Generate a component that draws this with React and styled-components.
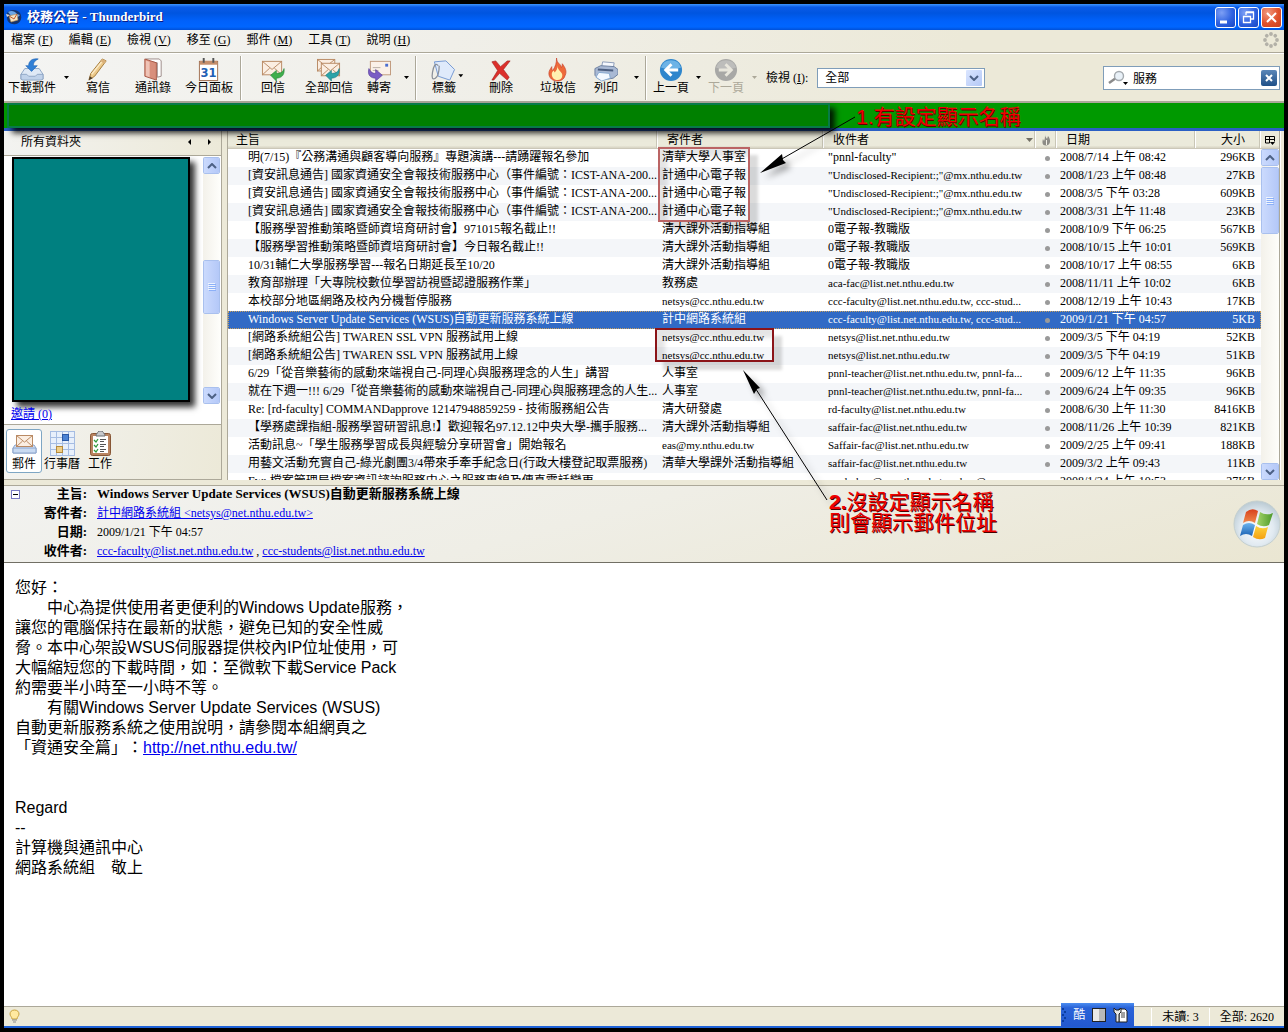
import React from "react";
import styled, { createGlobalStyle, css } from "styled-components";

const ink = "#000";
const face = "#ece9d8";
const line = "#aca899";
const xpBlue = "#316ac5";
const serif = '"Liberation Serif", "Noto Sans CJK TC", serif';
const sans = '"Liberation Sans", "Noto Sans CJK TC", sans-serif';
const chrome = "linear-gradient(100deg, #f4f4f2 0%, #f0efe9 35%, #ece9d8 75%)";

const Global = createGlobalStyle`
  * { box-sizing: border-box; }
  body { margin: 0; background: #000; font: 12px/16px ${serif}; color: ${ink}; text-spacing-trim: space-all; }
  button, input, select { font: inherit; color: inherit; padding: 0; border: 0; background: none; border-radius: 0; }
  a { color: #0000ee; }
  svg { display: block; }
`;

const Desktop = styled.div`
  position: relative;
  display: flex;
  min-height: 100vh;
  padding: 4px;
  overflow: hidden;
`;
const Window = styled.main`
  flex: 1;
  min-width: 0;
  display: flex;
  flex-direction: column;
  background: ${face};
  border-bottom: 2px solid #1e62d8;
`;

/* Title bar */
const TitleBar = styled.header`
  display: flex;
  align-items: center;
  gap: 5px;
  height: 26px;
  padding: 0 2px 0 2px;
  background: linear-gradient(#3d95ff 0, #0a5be8 12%, #0055e0 35%, #0061fb 65%, #0066ff 88%, #0050d8 100%);
`;
const WindowTitle = styled.h1`
  flex: 1;
  margin: 0;
  font-size: 13px;
  line-height: 18px;
  font-weight: 700;
  color: #fff;
  text-shadow: 1px 1px #0a1883;
`;
const WindowButtons = styled.div`
  display: flex;
  gap: 2px;
`;
const WindowButton = styled.button`
  width: 21px;
  height: 21px;
  border: 1px solid #fff;
  border-radius: 3px;
  background: ${(p) =>
    p.$close
      ? "radial-gradient(circle at 30% 25%, #f09a80, #e0512b 55%, #c8401c)"
      : "radial-gradient(circle at 30% 25%, #7d9ff5, #2f62e0 55%, #1747c4)"};
`;

/* Menus */
const MenuBar = styled.nav`
  display: flex;
  align-items: center;
  gap: 16px;
  height: 23px;
  padding: 0 5px 2px 7px;
  background: ${chrome};
  border-bottom: 1px solid ${line};
`;
const MenuItem = styled.button`
  line-height: 18px;
  white-space: nowrap;
`;
const Spacer = styled.div`
  flex: 1;
`;

/* Tool bar */
const ToolBar = styled.div`
  display: flex;
  align-items: center;
  height: 50px;
  padding-right: 4px;
  background: ${chrome};
  border-top: 1px solid #fff;
  border-bottom: 2px solid ${line};
`;
const ToolButton = styled.button`
  display: flex;
  flex-direction: column;
  align-items: center;
  width: ${(p) => p.$w}px;
  padding-bottom: 4px;
  line-height: 12px;
  white-space: nowrap;
  color: ${(p) => (p.disabled ? "#aca899" : ink)};
`;
const CaretButton = styled.button`
  display: flex;
  justify-content: center;
  width: 12px;
  color: ${(p) => (p.disabled ? "#aca899" : ink)};
`;
const ToolSeparator = styled.div`
  width: 2px;
  height: 44px;
  margin: 0 ${(p) => (p.$wide ? 4 : 3)}px;
  background: ${line};
  border-right: 1px solid #fff;
`;
const FieldLabel = styled.label`
  margin: 0 9px 0 6px;
  white-space: nowrap;
`;
const SelectBox = styled.div`
  display: grid;
  grid-template-columns: 1fr 18px;
  align-items: center;
  width: 168px;
  height: 20px;
  border: 1px solid #7f9db9;
  background: #fff;
`;
const Select = styled.select`
  grid-row: 1;
  grid-column: 1 / 3;
  height: 18px;
  padding-left: 7px;
  appearance: none;
  outline: 0;
`;
const SelectArrow = styled.span`
  grid-row: 1;
  grid-column: 2;
  display: grid;
  place-items: center;
  width: 16px;
  height: 16px;
  background: linear-gradient(135deg, #dbe6ff, #b4c8f6);
  border-radius: 1px;
  pointer-events: none;
`;
const SearchBox = styled.form`
  display: flex;
  align-items: center;
  gap: 5px;
  width: 177px;
  height: 24px;
  margin-left: auto;
  padding: 0 2px 0 4px;
  border: 1px solid #7f9db9;
  background: #fff;
`;
const SearchInput = styled.input`
  flex: 1;
  min-width: 0;
  height: 20px;
  outline: 0;
`;
const ClearButton = styled.button`
  display: grid;
  place-items: center;
  width: 16px;
  height: 16px;
  border-radius: 2px;
  background: linear-gradient(#5c87b8, #1f4f87);
`;

/* Covered strip beneath the tool bar */
const Strip = styled.div`
  position: relative;
  z-index: 2;
  height: 28px;
  padding-left: 3px;
  background: #009900;
  border-bottom: 3px solid #2a5fc4;
`;
const StripCover = styled.div`
  width: 823px;
  height: 25px;
  background: #008000;
  border: 2px solid #077a48;
  box-shadow: 5px 5px 6px rgba(0, 0, 0, 0.85);
`;

/* Upper panes */
const Panes = styled.div`
  flex: 0 0 349px;
  display: flex;
  min-height: 0;
`;
const FolderPane = styled.aside`
  width: 218px;
  display: flex;
  flex-direction: column;
  border-right: 1px solid ${line};
`;
const PaneHeader = styled.div`
  display: flex;
  align-items: center;
  height: 25px;
  padding: 0 2px 3px 17px;
  background: linear-gradient(100deg, #f3f3f1, #ece9d8);
  border-bottom: 1px solid ${line};
`;
const PaneTitle = styled.span`
  flex: 1;
`;
const PaneArrow = styled.button`
  display: grid;
  place-items: center;
  width: 20px;
  height: 16px;
`;
const FolderArea = styled.div`
  flex: 1;
  min-height: 0;
  display: flex;
  flex-direction: column;
  background: #fff;
`;
const FolderBody = styled.div`
  display: flex;
  justify-content: space-between;
  height: 248px;
  padding: 1px 1px 0 8px;
`;
const FolderCover = styled.div`
  width: 178px;
  height: 245px;
  background: #008080;
  border: 2px solid #000;
  box-shadow: 5px 5px 6px rgba(0, 0, 0, 0.8);
`;
const InviteLink = styled.a`
  align-self: flex-start;
  position: relative;
  padding-left: 7px;
  line-height: 20px;
`;
const ModeBar = styled.div`
  display: flex;
  align-items: center;
  gap: 2px;
  height: 56px;
  padding: 0 2px 2px;
  background: linear-gradient(100deg, #f3f3f1, #ece9d8);
  border-top: 1px solid ${line};
  border-bottom: 1px solid ${line};
`;
const ModeButton = styled.button`
  display: flex;
  flex-direction: column;
  align-items: center;
  justify-content: center;
  width: 36px;
  height: 44px;
  white-space: nowrap;
  border: 1px solid transparent;
  border-radius: 3px;
  ${(p) =>
    p.$active &&
    css`
      background: #fff;
      border-color: #7ea6c4;
    `}
`;
const Splitter = styled.div`
  width: 6px;
  background: ${face};
  border-right: 1px solid ${line};
`;

const ListPane = styled.section`
  flex: 1;
  min-width: 0;
  display: grid;
  grid-template-columns: 1fr 18px;
  background: #fff;
  border-right: 1px solid ${line};
`;
const ListClip = styled.div`
  overflow: hidden;
  min-width: 0;
`;
const WindowEdge = styled.div`
  width: 4px;
  background: ${face};
  border-left: 1px solid #fff;
`;
const Table = styled.table`
  width: 100%;
  table-layout: fixed;
  border-collapse: separate;
  border-spacing: 0;
`;
const headFill = css`
  height: 18px;
  background: linear-gradient(#ebeadb 85%, #d6d2c2);
  border-bottom: 1px solid #cbc7b8;
`;
const Th = styled.th`
  ${headFill}
  padding: 0 ${(p) => (p.$end ? 16 : 3)}px 0 ${(p) => p.$pad ?? 9}px;
  font-weight: 400;
  text-align: ${(p) => (p.$end ? "right" : "left")};
  box-shadow: inset -1px 0 #fff, inset -2px 0 #c9c6b6;
`;
const ThInner = styled.span`
  display: flex;
  align-items: center;
  justify-content: space-between;
`;
const Td = styled.td`
  height: 18px;
  padding: 0 ${(p) => (p.$end ? 6 : 0)}px 0 ${(p) => p.$pad ?? 4}px;
  font-size: ${(p) => (p.$address ? 11 : 12)}px;
  line-height: 16px;
  vertical-align: ${(p) => (p.$mid ? "middle" : "top")};
  overflow: hidden;
  white-space: nowrap;
  text-overflow: ellipsis;
  text-align: ${(p) => (p.$end ? "right" : "left")};
`;
const Row = styled.tr`
  background: #fff;
  &:nth-child(even) { background: #f4f6f9; }
  ${(p) =>
    p.$selected &&
    css`
      && { background: ${xpBlue}; color: #fff; outline: 1px dotted #c9a05c; outline-offset: -1px; }
    `}
`;
const Dot = styled.i`
  display: block;
  width: 5px;
  height: 5px;
  border-radius: 50%;
  background: #9a9a9a;
`;
const Side = styled.div`
  display: flex;
  flex-direction: column;
  min-height: 0;
`;
const PickerButton = styled.button`
  ${headFill}
  display: grid;
  place-items: center;
`;

/* Scroll bars */
const Track = styled.div`
  flex: ${(p) => (p.$w ? "none" : 1)};
  width: ${(p) => (p.$w ? p.$w + "px" : "100%")};
  display: flex;
  flex-direction: column;
  background: linear-gradient(90deg, #f3f1ea, #fefefb);
`;
const thumbSkin = css`
  display: grid;
  place-items: center;
  width: 100%;
  border: 1px solid #fff;
  outline: 1px solid #a9c0ee;
  outline-offset: -1px;
  border-radius: 2px;
  background: linear-gradient(90deg, #cbdafd, #b4c8f8);
`;
const TrackButton = styled.button`
  ${thumbSkin}
  height: 17px;
`;
const Thumb = styled.div`
  ${thumbSkin}
  height: ${(p) => p.$h}px;
`;
const Gap = styled.div`
  flex: ${(p) => p.$grow};
`;

/* Message */
const MessageHead = styled.section`
  display: flex;
  align-items: flex-start;
  height: 78px;
  margin-top: 5px;
  padding: 0 3px 0 7px;
  background: linear-gradient(165deg, #f2f2f0 0%, #efeee6 45%, #eae6d2 100%);
  border-top: 1px solid ${line};
  border-bottom: 1px solid #716f64;
`;
const Toggle = styled.button`
  display: grid;
  place-items: center;
  width: 9px;
  height: 9px;
  margin-top: 4px;
  border: 1px solid #7b7bc4;
  background: #fff;
`;
const Fields = styled.dl`
  flex: 1;
  display: grid;
  grid-template-columns: 67px 1fr;
  column-gap: 10px;
  row-gap: 3px;
  margin: 0;
`;
const Term = styled.dt`
  font-size: 13px;
  font-weight: 700;
  text-align: right;
`;
const Detail = styled.dd`
  margin: 0;
  font-size: ${(p) => (p.$strong ? 13 : 12)}px;
  font-weight: ${(p) => (p.$strong ? 700 : 400)};
`;
const Badge = styled.div`
  align-self: center;
`;
const MessageBody = styled.article`
  flex: 1;
  padding: 15px 11px;
  background: #fff;
  font: 16px/20px ${sans};
`;
const Paragraph = styled.p`
  margin: 0;
  min-height: 20px;
  white-space: pre;
`;

/* Status bar */
const StatusBar = styled.footer`
  display: flex;
  align-items: center;
  height: 20px;
  padding: 0 10px 0 5px;
  background: ${face};
  border-top: 1px solid ${line};
`;
const StatusCell = styled.span`
  margin-left: 10px;
  padding-left: 10px;
  line-height: 18px;
  border-left: 1px solid #fff;
`;
const LanguageBar = styled.div`
  display: flex;
  align-items: center;
  gap: 7px;
  height: 24px;
  margin: -4px 7px 0 0;
  padding: 0 6px 0 1px;
  color: #fff;
  background: linear-gradient(#4b8df0, #2a63d8 20%, #2258d0);
`;

/* Notes drawn over the window */
const Notes = styled.div`
  position: absolute;
  top: 0;
  right: 0;
  width: 633px;
  height: 600px;
  z-index: 5;
  pointer-events: none;
`;
const Frame = styled.div`
  position: absolute;
  left: ${(p) => p.$x}px;
  top: ${(p) => p.$y}px;
  width: ${(p) => p.$w}px;
  height: ${(p) => p.$h}px;
  border: 2px solid ${(p) => p.$tone};
  box-shadow: 8px 8px 3px rgba(0, 0, 0, 0.14), inset 8px 8px 4px rgba(0, 0, 0, 0.1);
`;
const NoteText = styled.p`
  position: absolute;
  left: ${(p) => p.$x}px;
  top: ${(p) => p.$y}px;
  margin: 0;
  font: 21px/21px ${sans};
  color: #f00000;
  white-space: nowrap;
  text-shadow: 1px 1px ${(p) => p.$shade};
`;
const Arrows = styled.svg`
  position: absolute;
  left: 0;
  top: 0;
  filter: drop-shadow(5px 5px 3px rgba(0, 0, 0, 0.35));
`;

/* Icons */
const Caret = () => (
  <svg width="5" height="3" viewBox="0 0 5 3"><path d="M0 0h5L2.5 3z" fill="currentColor" /></svg>
);
const Chevron = ({ up }) => (
  <svg width="10" height="6" viewBox="0 0 10 6">
    <path d={up ? "M1 5l4-4 4 4" : "M1 1l4 4 4-4"} fill="none" stroke="#4d6185" strokeWidth="2" />
  </svg>
);
const Grip = () => (
  <svg width="8" height="8" viewBox="0 0 8 8">
    <path d="M0 .5h7M0 2.5h7M0 4.5h7M0 6.5h7" stroke="#eef4fe" />
    <path d="M1 1.5h7M1 3.5h7M1 5.5h7M1 7.5h7" stroke="#8cb0f8" />
  </svg>
);
const envelope = (x, y, w, h) => (
  <g stroke="#b98a64" strokeWidth="1">
    <rect x={x} y={y} width={w} height={h} fill="#fbeee2" />
    <path d={`M${x} ${y + h}l${w * 0.38} ${-h * 0.5}M${x + w} ${y + h}l${-w * 0.38} ${-h * 0.5}M${x} ${y}l${w / 2} ${h * 0.6}l${w / 2} ${-h * 0.6}`} fill="none" />
  </g>
);
const art = {
  get: (
    <>
      <path d="M5 11h15l4 6v5H1v-5z" fill="#dfe9f6" stroke="#8fa6c6" />
      <path d="M1 17h6l2 2h7l2-2h6v5l-2 1H3l-2-1z" fill="#c0d2ea" stroke="#8fa6c6" />
      <path d="M19 1c-6-1-10 2-10 7H6l6 6 6-6h-4c0-3 1-5 5-7z" fill="#2f7fd6" stroke="#1b5fb0" strokeWidth=".6" />
    </>
  ),
  write: (
    <>
      <path d="M3 23l2-7L17 1l4 2-12 16z" fill="#ecc98a" stroke="#a27a3c" />
      <path d="M6 17L18 2" stroke="#fbe9c4" strokeWidth="1.5" />
      <path d="M3 23l1-4 3 2z" fill="#4a3a28" />
      <path d="M17 1l4 2-2 3-4-3z" fill="#d9b07a" />
    </>
  ),
  book: (
    <>
      <path d="M5 1h14l2 2v16l-4 1V5L5 3z" fill="#fff" stroke="#9c8b88" />
      <path d="M4 1l12 4v18L4 19z" fill="#d88f7c" stroke="#a85a48" />
      <path d="M5 2.500l4 1.500v16l-4-1.500z" fill="#efc3b6" />
    </>
  ),
  today: (
    <>
      <rect x="2.500" y="3.500" width="19" height="20" fill="#fff" stroke="#a06f50" />
      <rect x="3" y="3" width="18" height="4" fill="#c58e6b" />
      <path d="M7 0v5M17 0v5" stroke="#555" strokeWidth="2" />
      <text x="12" y="20" fontFamily="DejaVu Sans" fontSize="12" fontWeight="700" fill="#1f5fb5" textAnchor="middle">31</text>
    </>
  ),
  reply: (
    <>
      {envelope(1.5, 3.5, 20, 14)}
      <path d="M10 18l6-5v3c4 0 7-1 8-5 1 7-3 10-8 10v3z" fill="#3fae4c" stroke="#1f7f33" strokeWidth=".6" />
    </>
  ),
  replyAll: (
    <>
      {envelope(0.5, 1.5, 18, 12)}
      {envelope(4.5, 5.5, 19, 13)}
      <path d="M9 18l6-5v3c4 0 7-1 8-5 1 7-3 10-8 10v3z" fill="#2ba3a8" stroke="#14777e" strokeWidth=".6" />
    </>
  ),
  forward: (
    <>
      <rect x="3.500" y="3.500" width="21" height="14" fill="#fbf1e8" stroke="#c09a7c" />
      <path d="M6 10h8M6 13h6" stroke="#b9b0a6" />
      <rect x="19" y="6" width="3" height="3" fill="#4c6fd0" />
      <path d="M16 18l-7-6v4c-3 0-5-1-7-5-2 7 2 10 7 10v3z" fill="#7a5cc4" stroke="#4f3597" strokeWidth=".6" />
    </>
  ),
  remove: <path d="M3 4l4-1 5 6 7-6h3l-7 9 6 8-2 3-8-7-6 7H3l6-10z" fill="#dc2f2a" stroke="#9c1a18" strokeWidth=".6" />,
  junk: (
    <>
      <path d="M11 0c0 6 5 6 5 10 1-1 1-3 1-4 3 4 5 8 3 12-1 4-4 6-8 6-5 0-9-3-9-8 0-3 2-5 3-7 0 2 0 3 1 4 3-4 4-8 4-13z" fill="#ee6a3a" stroke="#c8402a" strokeWidth=".7" />
      <path d="M12 8c0 5 5 6 5 10 0 3-2 5-5 5-4 0-6-3-6-6 0-2 1-3 2-4l1 2c2-2 3-4 3-7z" fill="#fff1b0" />
    </>
  ),
  print: (
    <>
      <path d="M8 9l1-5 12 1-1 6z" fill="#f5f8fd" stroke="#8c9cb8" />
      <path d="M1 11l6-3 14 1 4 3v5l-5 4-6 1H5l-4-4z" fill="#a9b9d4" stroke="#6c7f9f" />
      <path d="M4 12l16 1" stroke="#4d5f80" strokeWidth="2" />
      <path d="M5 15l11 1 1 5-9 3-6-4z" fill="#f4f9ff" stroke="#86a8cf" />
    </>
  ),
};
const Pic = ({ name }) => <svg width="24" height="24" viewBox="0 0 25 25" aria-hidden="true">{art[name]}</svg>;
const TagPic = () => (
  <svg width="40" height="24" viewBox="0 0 40 25" aria-hidden="true">
    <path d="M10 4l12-1 9 9-5 11-12-4z" fill="#dfeafb" stroke="#7398d2" />
    <path d="M14 8c-3-4-5 1-6 7s0 8 3 6 4-7 4-13" fill="none" stroke="#8a8f98" strokeWidth="1.3" />
    <path d="M35 17h5l-2.500 3z" />
  </svg>
);
const RoundArrow = ({ next }) => (
  <svg width="24" height="24" viewBox="0 0 25 25" aria-hidden="true">
    <circle cx="12.500" cy="12.500" r="11.500" fill={next ? "#a8a8a6" : "#2f86cc"} />
    <path d="M2 10a11 11 0 0121 0q-10 4-21 0z" fill={next ? "#bdbdbb" : "#6db3e6"} />
    <path d={next ? "M5 12.500h13M12 6.500l6 6-6 6" : "M20 12.500H7M13 6.500l-6 6 6 6"} fill="none" stroke={next ? "#e8e6dc" : "#fff"} strokeWidth="3" />
  </svg>
);
const AppIcon = () => (
  <svg width="16" height="16" viewBox="0 0 16 16" aria-hidden="true">
    <path d="M1 4c3-4 10-4 13 0 3 5 0 10-4 11-5 1-9-2-9-6z" fill="#14346f" />
    <path d="M2 3c3-2 7-1 9 2l3 1-2 2H6z" fill="#6ba6e8" />
    <path d="M3 7l8-2 1 6-7 2z" fill="#f4e3c4" stroke="#b68b52" strokeWidth=".6" />
    <path d="M3 7l5 3 3-5" fill="none" stroke="#c25a2c" />
    <path d="M0 5l4 1-3 2z" fill="#d8d8d8" />
  </svg>
);
const WinGlyph = ({ kind }) => (
  <svg width="19" height="19" viewBox="0 0 19 19" stroke="#fff" fill="none" aria-hidden="true">
    {kind === "min" && <path d="M4 14h7" strokeWidth="3" />}
    {kind === "max" && <path d="M7 7V4.500h7.500V11H12M7 4h8M4.500 8.500h7v6h-7zM4 8.500h8" strokeWidth="1.3" />}
    {kind === "close" && <path d="M5 5l9 9M14 5l-9 9" strokeWidth="2" />}
  </svg>
);
const Throbber = () => (
  <svg width="16" height="16" viewBox="0 0 16 16" fill="#b3b1a8" aria-hidden="true">
    {[0, 45, 90, 135, 180, 225, 270, 315].map((a) => (
      <circle key={a} cx="8" cy="2" r="1.900" transform={`rotate(${a} 8 8)`} />
    ))}
  </svg>
);
const Magnifier = () => (
  <svg width="20" height="16" viewBox="0 0 20 16" aria-hidden="true">
    <path d="M1 13l7-5" stroke="#8b8b8b" strokeWidth="2.500" />
    <circle cx="11" cy="6" r="4.500" fill="#e9f1f8" stroke="#a3a9ae" strokeWidth="1.400" />
    <path d="M15 12h5l-2.500 3z" />
  </svg>
);
const Flame = () => (
  <svg width="9" height="12" viewBox="0 0 9 12" aria-hidden="true">
    <path d="M3 0c0 3 1 3 2 5l1-3c3 3 3 9-1.500 9.500C0 12 0 8 1 5l1 2c1-2 1-4 1-7z" fill="#8d8c86" />
    <path d="M4.500 6v5" stroke="#f3f1e8" />
  </svg>
);
const WindowsBadge = () => (
  <svg width="48" height="48" viewBox="0 0 48 48" aria-hidden="true">
    <defs>
      <radialGradient id="orb" cx=".5" cy=".6" r=".6">
        <stop offset="0" stopColor="#fff" />
        <stop offset=".6" stopColor="#e1eaf1" />
        <stop offset="1" stopColor="#b9c9d2" />
      </radialGradient>
      <linearGradient id="paneRed" x2="0" y2="1"><stop stopColor="#d8401c" /><stop offset="1" stopColor="#f08a4c" /></linearGradient>
      <linearGradient id="paneGreen" x2="1"><stop stopColor="#a4d468" /><stop offset="1" stopColor="#4d9a2a" /></linearGradient>
      <linearGradient id="paneBlue" x2="0" y2="1"><stop stopColor="#6ab4ee" /><stop offset="1" stopColor="#1c62b4" /></linearGradient>
      <linearGradient id="paneGold" x2="0" y2="1"><stop stopColor="#fdd23c" /><stop offset="1" stopColor="#f4a012" /></linearGradient>
    </defs>
    <circle cx="24" cy="24" r="23" fill="url(#orb)" stroke="#c4cfcf" />
    <path d="M13 12q6-5 12-1l-3 12q-6-4-12 0z" fill="url(#paneRed)" />
    <path d="M27 12q6 4 13 1l-4 12q-6 3-12-1z" fill="url(#paneGreen)" />
    <path d="M10 25q6-4 12 0l-3 11q-6-4-12 0z" fill="url(#paneBlue)" />
    <path d="M23 26q6 4 12 1l-3 11q-6 3-12-1z" fill="url(#paneGold)" />
  </svg>
);
const MailMode = () => (
  <svg width="25" height="25" viewBox="0 -3 25 25" aria-hidden="true">
    <path d="M3 11l-2 3v5h23v-5l-2-3z" fill="#d5e2f5" stroke="#8aa4cc" />
    {envelope(4.5, 1.5, 16, 11)}
    <path d="M1 14h23v5H1z" fill="#c9daf2" stroke="#8aa4cc" />
  </svg>
);
const CalendarMode = () => (
  <svg width="25" height="25" viewBox="0 0 25 25" aria-hidden="true">
    <rect width="25" height="25" fill="#e8f0fb" />
    <path d="M0 .5h25M0 6.500h25M0 12.500h25M0 18.500h25M0 24.500h25M.5 0v25M6.500 0v25M12.500 0v25M18.500 0v25M24.500 0v25" stroke="#a6bde2" />
    <rect x="12.500" y="3.500" width="6" height="6" fill="#4a82d4" stroke="#2a58a4" />
    <rect x="6.500" y="15.500" width="6" height="6" fill="#f0cf86" stroke="#b58a3c" />
  </svg>
);
const TaskMode = () => (
  <svg width="21" height="25" viewBox="0 0 21 25" aria-hidden="true">
    <rect x=".5" y="2.500" width="20" height="22" rx="2" fill="#b98460" stroke="#875636" />
    <rect x="3" y="5" width="15" height="17" fill="#fff" />
    <path d="M6 5c0-3 2-3 3-5h3c1 2 3 2 3 5z" fill="#c7c9cc" stroke="#6a6e73" />
    <path d="M4 9l2 2 2-3M4 14l2 2 2-3M4 19l2 2 2-3" fill="none" stroke="#2f9a3c" strokeWidth="1.300" />
    <path d="M10 8.500h6M10 10.500h4M10 13.500h6M10 15.500h4M10 18.500h6M10 20.500h4" stroke="#555" />
  </svg>
);
const Bulb = () => (
  <svg width="11" height="15" viewBox="0 0 11 15" aria-hidden="true">
    <path d="M5.500 1c3 0 4.500 2 4.500 4s-2 3-2 5H3C3 8 1 7 1 5s1.500-4 4.500-4z" fill="#ffe9a0" stroke="#c9a23c" />
    <path d="M3 11h5M4 13h3" stroke="#8b8b8b" />
  </svg>
);

const menus = [["檔案", "F"], ["編輯", "E"], ["檢視", "V"], ["移至", "G"], ["郵件", "M"], ["工具", "T"], ["說明", "H"]];
const security = "[資安訊息通告] 國家資通安全會報技術服務中心（事件編號：ICST-ANA-200...";
const undisclosed = '"Undisclosed-Recipient:;"@mx.nthu.edu.tw';
const cccLists = "ccc-faculty@list.net.nthu.edu.tw, ccc-stud...";
const pnnlLists = "pnnl-teacher@list.net.nthu.edu.tw, pnnl-fa...";
const mails = [
  ["明(7/15)『公務溝通與顧客導向服務』專題演講---請踴躍報名參加", "清華大學人事室", '"pnnl-faculty"', "2008/7/14 上午 08:42", "296KB"],
  [security, "計通中心電子報", undisclosed, "2008/1/23 上午 08:48", "27KB"],
  [security, "計通中心電子報", undisclosed, "2008/3/5 下午 03:28", "609KB"],
  [security, "計通中心電子報", undisclosed, "2008/3/31 上午 11:48", "23KB"],
  ["【服務學習推動策略暨師資培育研討會】971015報名截止!!", "清大課外活動指導組", "0電子報-教職版", "2008/10/9 下午 06:25", "567KB"],
  ["【服務學習推動策略暨師資培育研討會】今日報名截止!!", "清大課外活動指導組", "0電子報-教職版", "2008/10/15 上午 10:01", "569KB"],
  ["10/31輔仁大學服務學習---報名日期延長至10/20", "清大課外活動指導組", "0電子報-教職版", "2008/10/17 上午 08:55", "6KB"],
  ["教育部辦理「大專院校數位學習訪視暨認證服務作業」", "教務處", "aca-fac@list.net.nthu.edu.tw", "2008/11/11 上午 10:02", "6KB"],
  ["本校部分地區網路及校內分機暫停服務", "netsys@cc.nthu.edu.tw", cccLists, "2008/12/19 上午 10:43", "17KB"],
  ["Windows Server Update Services (WSUS)自動更新服務系統上線", "計中網路系統組", cccLists, "2009/1/21 下午 04:57", "5KB"],
  ["[網路系統組公告] TWAREN SSL VPN 服務試用上線", "netsys@cc.nthu.edu.tw", "netsys@list.net.nthu.edu.tw", "2009/3/5 下午 04:19", "52KB"],
  ["[網路系統組公告] TWAREN SSL VPN 服務試用上線", "netsys@cc.nthu.edu.tw", "netsys@list.net.nthu.edu.tw", "2009/3/5 下午 04:19", "51KB"],
  ["6/29「從音樂藝術的感動來端視自己-同理心與服務理念的人生」講習", "人事室", pnnlLists, "2009/6/12 上午 11:35", "96KB"],
  ["就在下週一!!! 6/29「從音樂藝術的感動來端視自己-同理心與服務理念的人生...", "人事室", pnnlLists, "2009/6/24 上午 09:35", "96KB"],
  ["Re: [rd-faculty] COMMANDapprove 12147948859259 - 技術服務組公告", "清大研發處", "rd-faculty@list.net.nthu.edu.tw", "2008/6/30 上午 11:30", "8416KB"],
  ["【學務處課指組-服務學習研習訊息!】歡迎報名97.12.12中央大學-攜手服務...", "清大課外活動指導組", "saffair-fac@list.net.nthu.edu.tw", "2008/11/26 上午 10:39", "821KB"],
  ["活動訊息~「學生服務學習成長與經驗分享研習會」開始報名", "eas@my.nthu.edu.tw", "Saffair-fac@list.net.nthu.edu.tw", "2009/2/25 上午 09:41", "188KB"],
  ["用藝文活動充實自己-綠光劇團3/4帶來手牽手紀念日(行政大樓登記取票服務)", "清華大學課外活動指導組", "saffair-fac@list.net.nthu.edu.tw", "2009/3/2 上午 09:43", "11KB"],
  ["Fw: 檔案管理局檔案資訊諮詢服務中心之服務專線及傳真電話變更", "", "pnnl-chao@my.nthu.edu.tw, chao@my...", "2008/1/24 上午 10:53", "27KB"],
];
const isAddress = (text) => text.includes("@");
const letter = [
  "您好：",
  "　　中心為提供使用者更便利的Windows Update服務，",
  "讓您的電腦保持在最新的狀態，避免已知的安全性威",
  "脅。本中心架設WSUS伺服器提供校內IP位址使用，可",
  "大幅縮短您的下載時間，如：至微軟下載Service Pack",
  "約需要半小時至一小時不等。",
  "　　有關Windows Server Update Services (WSUS)",
  "自動更新服務系統之使用說明，請參閱本組網頁之",
];
const signature = ["", "", "Regard", "--", "計算機與通訊中心", "網路系統組　敬上"];

const Tool = ({ w, label, name, icon, disabled }) => (
  <ToolButton $w={w} disabled={disabled}>
    {icon ?? <Pic name={name} />}
    {label}
  </ToolButton>
);
const Drop = ({ label, disabled }) => (
  <CaretButton aria-label={label} disabled={disabled}><Caret /></CaretButton>
);
const ScrollBar = ({ w, before, thumb, after }) => (
  <Track $w={w}>
    <TrackButton aria-label="向上捲動"><Chevron up /></TrackButton>
    <Gap $grow={before} />
    <Thumb $h={thumb}><Grip /></Thumb>
    <Gap $grow={after} />
    <TrackButton aria-label="向下捲動"><Chevron /></TrackButton>
  </Track>
);

export default function App() {
  return (
    <Desktop>
      <Global />
      <Window>
        <TitleBar>
          <AppIcon />
          <WindowTitle>校務公告 - Thunderbird</WindowTitle>
          <WindowButtons>
            <WindowButton aria-label="最小化"><WinGlyph kind="min" /></WindowButton>
            <WindowButton aria-label="還原"><WinGlyph kind="max" /></WindowButton>
            <WindowButton $close aria-label="關閉"><WinGlyph kind="close" /></WindowButton>
          </WindowButtons>
        </TitleBar>
        <MenuBar>
          {menus.map(([name, key]) => (
            <MenuItem key={key}>{name} (<u>{key}</u>)</MenuItem>
          ))}
          <Spacer />
          <Throbber />
        </MenuBar>
        <ToolBar>
          <Tool w={56} label="下載郵件" name="get" />
          <Drop label="下載選項" />
          <Tool w={52} label="寫信" name="write" />
          <Tool w={58} label="通訊錄" name="book" />
          <Tool w={54} label="今日面板" name="today" />
          <ToolSeparator $wide />
          <Tool w={54} label="回信" name="reply" />
          <Tool w={58} label="全部回信" name="replyAll" />
          <Tool w={42} label="轉寄" name="forward" />
          <Drop label="轉寄選項" />
          <ToolSeparator />
          <Tool w={48} label="標籤" icon={<TagPic />} />
          <Tool w={66} label="刪除" name="remove" />
          <Tool w={48} label="垃圾信" name="junk" />
          <Tool w={48} label="列印" name="print" />
          <Drop label="列印選項" />
          <ToolSeparator />
          <Tool w={42} label="上一頁" icon={<RoundArrow />} />
          <Drop label="上一頁清單" />
          <Tool w={44} label="下一頁" icon={<RoundArrow next />} disabled />
          <Drop label="下一頁清單" disabled />
          <FieldLabel htmlFor="view">檢視 (<u>I</u>):</FieldLabel>
          <SelectBox>
            <Select id="view" defaultValue="all"><option value="all">全部</option></Select>
            <SelectArrow><Chevron /></SelectArrow>
          </SelectBox>
          <SearchBox onSubmit={(e) => e.preventDefault()}>
            <Magnifier />
            <SearchInput type="text" aria-label="搜尋" defaultValue="服務" />
            <ClearButton type="reset" aria-label="清除">
              <svg width="8" height="8" viewBox="0 0 8 8"><path d="M1 1l6 6M7 1L1 7" stroke="#fff" strokeWidth="2" /></svg>
            </ClearButton>
          </SearchBox>
        </ToolBar>
        <Strip><StripCover /></Strip>

        <Panes>
          <FolderPane>
            <PaneHeader>
              <PaneTitle>所有資料夾</PaneTitle>
              <PaneArrow aria-label="上一個檢視"><svg width="3" height="6" viewBox="0 0 3 6"><path d="M3 0v6L0 3z" /></svg></PaneArrow>
              <PaneArrow aria-label="下一個檢視"><svg width="3" height="6" viewBox="0 0 3 6"><path d="M0 0v6l3-3z" /></svg></PaneArrow>
            </PaneHeader>
            <FolderArea>
              <FolderBody>
                <FolderCover />
                <ScrollBar w={17} before={86} thumb={54} after={73} />
              </FolderBody>
              <InviteLink href="#invite">邀請 (0)</InviteLink>
            </FolderArea>
            <ModeBar>
              <ModeButton $active><MailMode />郵件</ModeButton>
              <ModeButton><CalendarMode />行事曆</ModeButton>
              <ModeButton><TaskMode />工作</ModeButton>
            </ModeBar>
          </FolderPane>
          <Splitter />
          <ListPane>
            <ListClip>
              <Table>
                <colgroup>
                  <col />
                  <col width="166" />
                  <col width="212" />
                  <col width="21" />
                  <col width="139" />
                  <col width="65" />
                </colgroup>
                <thead>
                  <tr>
                    <Th $pad={8}>主旨</Th>
                    <Th>寄件者</Th>
                    <Th><ThInner>收件者<svg width="7" height="4" viewBox="0 0 7 4"><path d="M0 0h7L3.500 4z" fill="#716f64" /></svg></ThInner></Th>
                    <Th $pad={6}><Flame /></Th>
                    <Th>日期</Th>
                    <Th $end>大小</Th>
                  </tr>
                </thead>
                <tbody>
                  {mails.map(([subject, from, to, date, size], i) => (
                    <Row key={i} $selected={i === 9}>
                      <Td $pad={20}>{subject}</Td>
                      <Td $address={isAddress(from)}>{from}</Td>
                      <Td $address={isAddress(to)}>{to}</Td>
                      <Td $mid $pad={9}><Dot /></Td>
                      <Td $pad={3}>{date}</Td>
                      <Td $end>{size}</Td>
                    </Row>
                  ))}
                </tbody>
              </Table>
            </ListClip>
            <Side>
              <PickerButton aria-label="選擇欄位">
                <svg width="10" height="10" viewBox="0 0 10 10"><path d="M.5 1.500h9v5M.5 1v7h4M.5 4.500h9M4.500 1v7" fill="none" stroke="#000" /><path d="M5 7h5L7.500 10z" /></svg>
              </PickerButton>
              <ScrollBar before={1} thumb={67} after={229} />
            </Side>
          </ListPane>
          <WindowEdge />
        </Panes>

        <MessageHead>
          <Toggle aria-label="收合標頭"><svg width="5" height="1"><rect width="5" height="1" /></svg></Toggle>
          <Fields>
            <Term>主旨:</Term>
            <Detail $strong>Windows Server Update Services (WSUS)自動更新服務系統上線</Detail>
            <Term>寄件者:</Term>
            <Detail><a href="#from">計中網路系統組 &lt;netsys@net.nthu.edu.tw&gt;</a></Detail>
            <Term>日期:</Term>
            <Detail>2009/1/21 下午 04:57</Detail>
            <Term>收件者:</Term>
            <Detail>
              <a href="#faculty">ccc-faculty@list.net.nthu.edu.tw</a> , <a href="#students">ccc-students@list.net.nthu.edu.tw</a>
            </Detail>
          </Fields>
          <Badge><WindowsBadge /></Badge>
        </MessageHead>
        <MessageBody>
          {letter.map((text) => <Paragraph key={text}>{text}</Paragraph>)}
          <Paragraph>「資通安全篇」：<a href="#site">http://net.nthu.edu.tw/</a></Paragraph>
          {signature.map((text, i) => <Paragraph key={i}>{text}</Paragraph>)}
        </MessageBody>

        <StatusBar>
          <Bulb />
          <Spacer />
          <LanguageBar>
            <svg width="4" height="18" viewBox="0 0 4 18"><path d="M0 2h2v2H0zM2 5h2v2H2zM0 8h2v2H0zM2 11h2v2H2zM0 14h2v2H0z" fill="#0a3ca0" /></svg>
            酷
            <svg width="14" height="14" viewBox="0 0 14 14"><rect x=".5" y=".5" width="13" height="13" fill="#b9b9b9" stroke="#222" /><path d="M1 1h6v12H1z" fill="#e8e8e8" /></svg>
            <svg width="15" height="16" viewBox="0 0 15 16"><path d="M6 2h6l2 2v11H6z" fill="#fff" stroke="#222" /><path d="M8 6h4M8 8h4M8 10h4" stroke="#444" /><path d="M1 1v4l2 2v8h3V7l2-2V1L6 3H3z" fill="#e8e8e8" stroke="#222" /></svg>
          </LanguageBar>
          <StatusCell>未讀: 3</StatusCell>
          <StatusCell>全部: 2620</StatusCell>
        </StatusBar>
      </Window>

      <Notes>
        <Frame $x={3} $y={147} $w={92} $h={75} $tone="#bb6464" />
        <Frame $x={0} $y={328} $w={119} $h={34} $tone="#8b1418" />
        <Arrows width="400" height="520" viewBox="655 0 400 520">
          <path d="M855 117L780 160M827 500L752 383" stroke="#000" fill="none" />
          <path d="M760 173l22-19 1 6 3 3zM743 370l17 18-3 1-3 5z" />
        </Arrows>
        <NoteText $x={201} $y={106} $shade="#5a0000">1.有設定顯示名稱</NoteText>
        <NoteText $x={174} $y={491} $shade="#4a0000"><b>2.</b>沒設定顯示名稱<br />則會顯示郵件位址</NoteText>
      </Notes>
    </Desktop>
  );
}
